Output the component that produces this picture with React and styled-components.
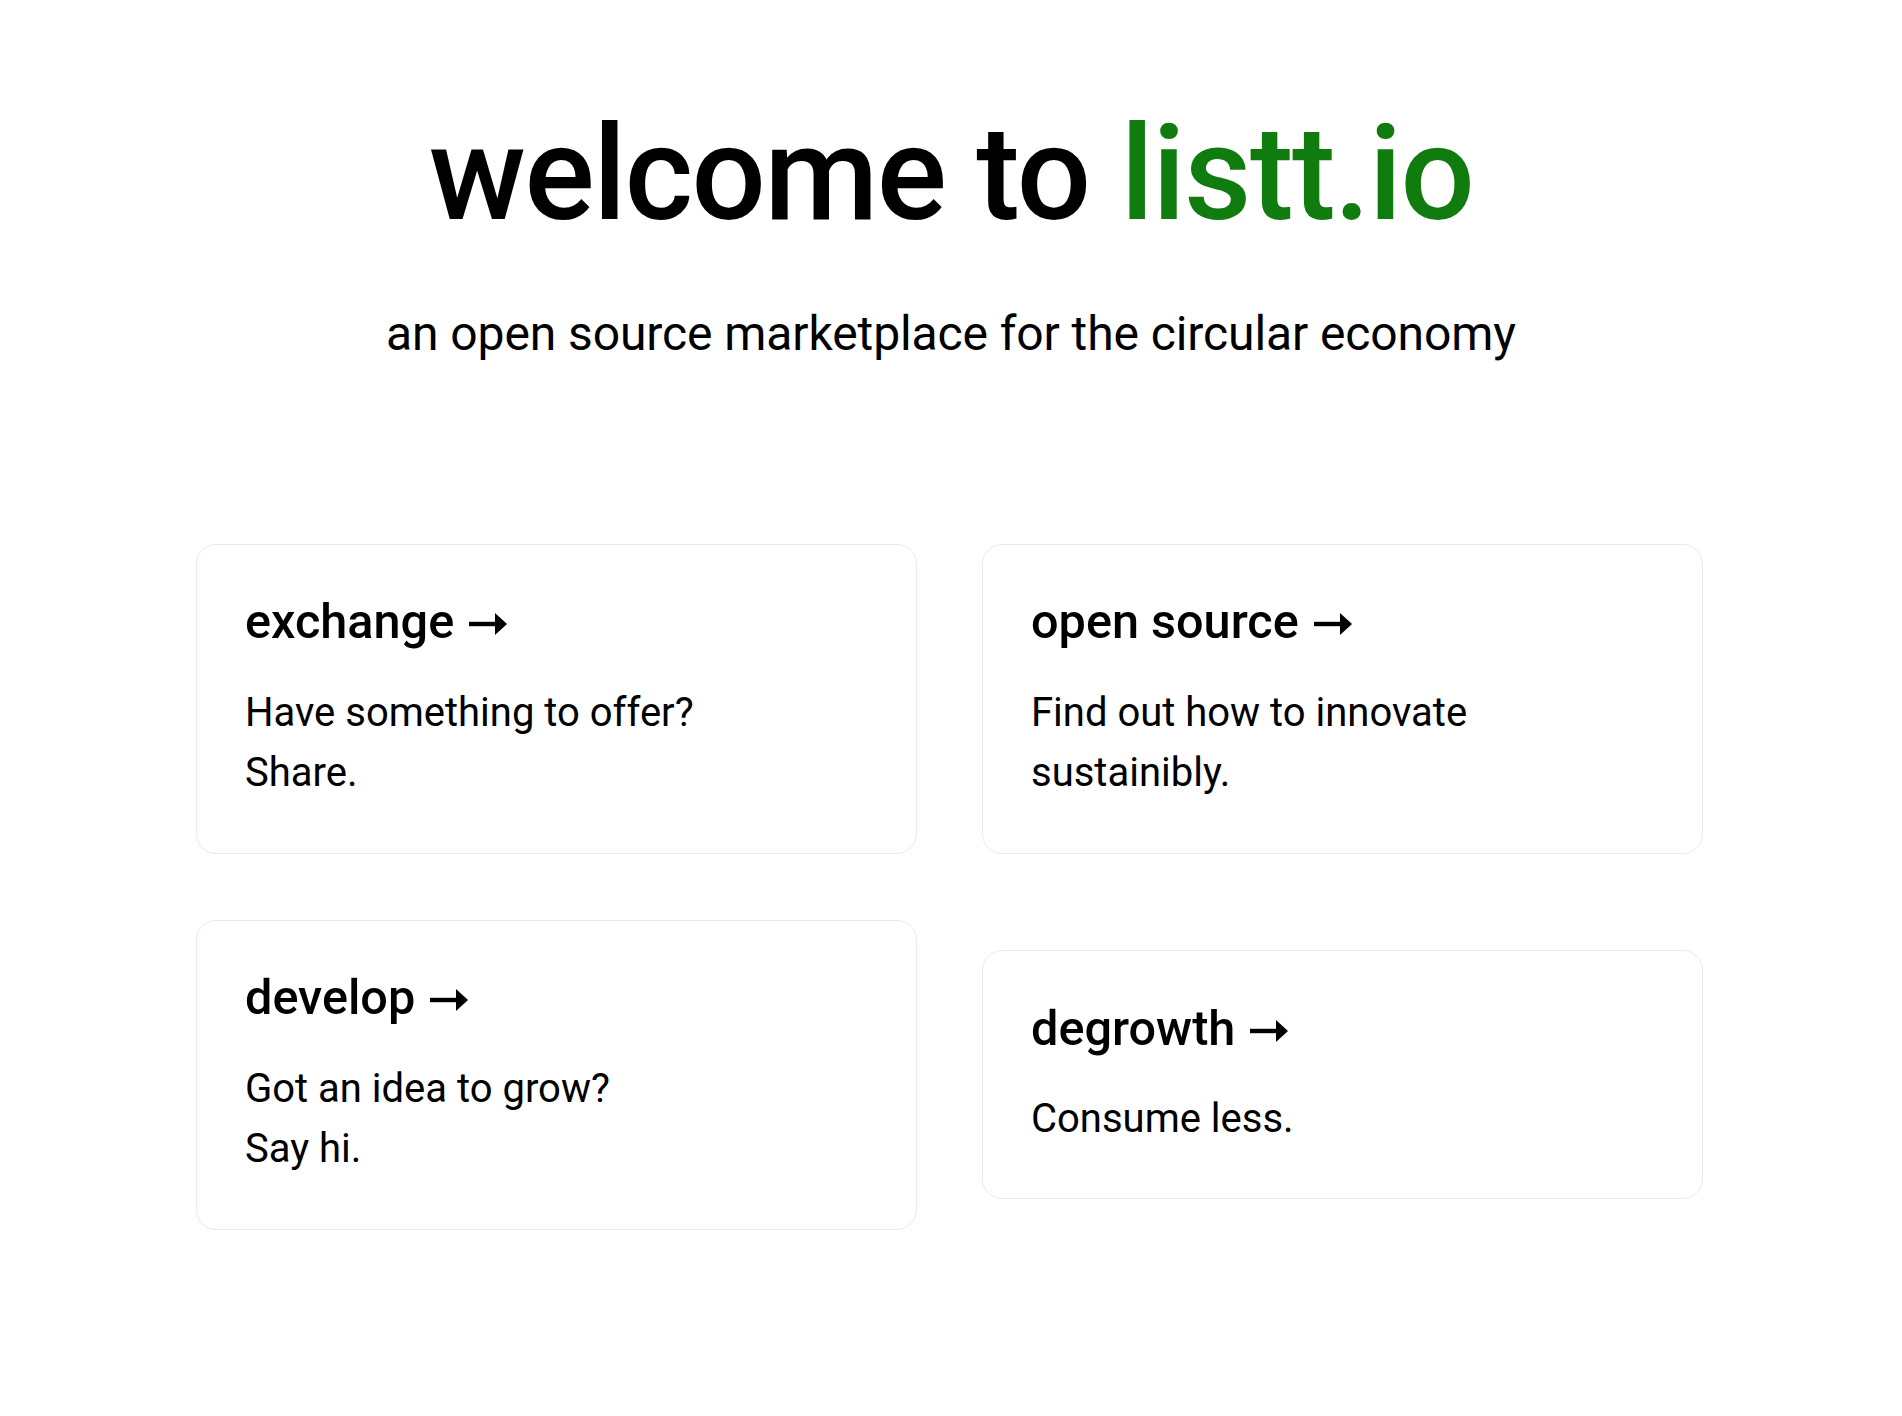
import React from 'react';
import styled, {createGlobalStyle} from 'styled-components';

const GlobalStyle = createGlobalStyle`
* {
  box-sizing: border-box;
}
html, body {
  margin: 0;
  padding: 0;
  background: #fff;
  color: #000;
  font-family: Roboto, "DejaVu Sans", "Liberation Sans", sans-serif;
}
`;

const Main = styled.main`
min-height: 1416px;
padding: 99px 0 120px;
display: flex;
flex-direction: column;
align-items: center;
`;

const Title = styled.h1`
margin: 0;
font-size: 131px;
line-height: 1.15;
font-weight: 500;
letter-spacing: -1.6px;
text-align: center;
`;

const Brand = styled.span`
color: #107c10;
`;

const Description = styled.p`
margin: 48.5px 0;
font-size: 48px;
line-height: 1.5;
letter-spacing: -0.1px;
text-align: center;
`;

const Grid = styled.div`
margin-top: 125px;
margin-right: 4px;
display: grid;
grid-template-columns: 721px 721px;
column-gap: 65px;
row-gap: 66px;
align-items: center;
`;

const Card = styled.a`
display: block;
padding: 48.5px;
border: 1px solid #eaeaea;
border-radius: 20px;
color: inherit;
text-decoration: none;
`;

const CardTitle = styled.h3`
margin: 0 0 32.4px 0;
font-size: 48.6px;
font-weight: 500;
`;

const ArrowIcon = styled.svg`
width: 38px;
height: 22px;
margin-left: 15px;
vertical-align: 3px;
`;

const CardText = styled.p`
margin: 0;
font-size: 40px;
line-height: 1.52;
`;

const Arrow = () => (
    <ArrowIcon viewBox="0 0 38 22" aria-label="→">
        <rect x="0" y="8.8" width="27" height="4.4" fill="#000"/>
        <polygon points="26,0 38,11 26,22" fill="#000"/>
    </ArrowIcon>
);

const cards = [
    {title: 'exchange', lines: ['Have something to offer?', 'Share.']},
    {title: 'open source', lines: ['Find out how to innovate', 'sustainibly.']},
    {title: 'develop', lines: ['Got an idea to grow?', 'Say hi.']},
    {title: 'degrowth', lines: ['Consume less.']},
];

const App = () => {
    return (
        <>
            <GlobalStyle/>
            <Main>
                <Title>welcome to <Brand>listt.io</Brand></Title>
                <Description>an open source marketplace for the circular economy</Description>
                <Grid>
                    {cards.map(card => (
                        <Card key={card.title} href="#">
                            <CardTitle>{card.title}<Arrow/></CardTitle>
                            <CardText>
                                {card.lines.map((line, i) => (
                                    <React.Fragment key={i}>
                                        {i > 0 && <br/>}
                                        {line}
                                    </React.Fragment>
                                ))}
                            </CardText>
                        </Card>
                    ))}
                </Grid>
            </Main>
        </>
    )
}

export default App;
